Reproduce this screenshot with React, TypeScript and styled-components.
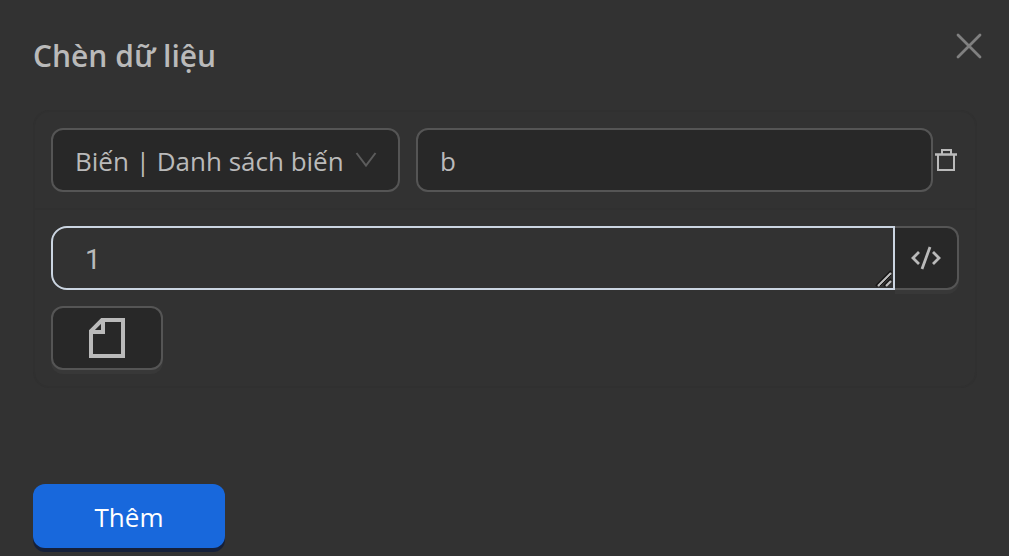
import React from "react";
import styled, { createGlobalStyle, css } from "styled-components";

const GlobalStyle = createGlobalStyle`
  *, *::before, *::after { box-sizing: border-box; }
  body {
    margin: 0;
    background: #323232;
    color: #bababa;
    font-family: "Open Sans", "Noto Sans", sans-serif;
    font-size: 26px;
  }
`;

const Dialog = styled.main`
  padding: 32px 32px 8px 33px;
`;

const Header = styled.header`
  display: flex;
  justify-content: space-between;
  align-items: flex-start;
  height: 78px;
`;

const Title = styled.h1`
  margin: 0;
  font-size: 30px;
  font-weight: 600;
  line-height: 48px;
`;

const IconButton = styled.button<{ $color?: string }>`
  display: flex;
  padding: 0;
  border: 0;
  background: none;
  color: ${(p) => p.$color ?? "#bababa"};
`;

const CloseButton = styled(IconButton)`
  margin-right: -6px;
`;

const Card = styled.section`
  border: 2px solid #303030;
  border-radius: 16px;
`;

const VariableRow = styled.div`
  display: flex;
  align-items: center;
  padding: 16px;
  border-bottom: 2px solid #303030;
`;

const control = css`
  height: 64px;
  border: 2px solid #555555;
  border-radius: 12px;
  background: #282828;
  color: #bababa;
  font: inherit;
  outline: none;
`;

const SelectWrap = styled.div`
  position: relative;
  flex: none;
  margin-right: 16px;
`;

const Select = styled.select`
  ${control}
  display: block;
  width: 349px;
  padding: 2px 22px 0;
  appearance: none;
`;

const Chevron = styled.svg`
  position: absolute;
  top: 24px;
  right: 23px;
  pointer-events: none;
`;

const NameInput = styled.input`
  ${control}
  flex: 1;
  min-width: 0;
  padding: 2px 22px 0;
`;

const Body = styled.div`
  padding: 16px;
`;

const ValueRow = styled.div`
  display: flex;
  margin-bottom: 16px;
`;

const ValueWrap = styled.div`
  position: relative;
  flex: 1;
`;

const ValueArea = styled.textarea`
  display: block;
  width: 100%;
  height: 64px;
  padding: 14px 32px 8px;
  border: 2px solid #cbd5e1;
  border-radius: 16px 0 0 16px;
  background: transparent;
  color: #bababa;
  font-family: Roboto, sans-serif;
  font-size: 28px;
  line-height: 36px;
  outline: none;
  resize: none;
  overflow: hidden;
`;

const Grip = styled.svg`
  position: absolute;
  right: 2px;
  bottom: 2px;
  pointer-events: none;
`;

const ToolButton = styled.button<{ $width: number; $joined?: boolean }>`
  ${control}
  display: flex;
  align-items: center;
  justify-content: center;
  width: ${(p) => p.$width}px;
  padding: 0;
  box-shadow: 0 4px 0 #383838;
  ${(p) => p.$joined && "border-left: 0; border-radius: 0 12px 12px 0;"}
`;

const Footer = styled.footer`
  padding-top: 96px;
`;

const PrimaryButton = styled.button`
  width: 192px;
  height: 64px;
  padding: 2px 0 0;
  border: 0;
  border-radius: 12px;
  background: #1868dc;
  box-shadow: 0 4px 0 #15203a;
  color: #ffffff;
  font: inherit;
`;

export default function App() {
  return (
    <>
      <GlobalStyle />
      <Dialog>
        <Header>
          <Title>Chèn dữ liệu</Title>
          <CloseButton type="button" aria-label="Đóng" $color="#808080">
            <svg width="28" height="28" viewBox="0 0 28 28" fill="none" stroke="currentColor" strokeWidth="2.8">
              <path d="M3 3L25 25M25 3L3 25" strokeLinecap="round" />
            </svg>
          </CloseButton>
        </Header>
        <Card>
          <VariableRow>
            <SelectWrap>
              <Select aria-label="Biến" defaultValue="list">
                <option value="list">Biến | Danh sách biến</option>
              </Select>
              <Chevron width="22" height="16" viewBox="0 0 22 16" fill="none" stroke="#5c5c5c" strokeWidth="2">
                <path d="M1.500 1L11 13.500L20.500 1" />
              </Chevron>
            </SelectWrap>
            <NameInput aria-label="Tên biến" defaultValue="b" />
            <IconButton type="button" aria-label="Xóa">
              <svg width="26" height="26" viewBox="0 0 26 26" fill="none" stroke="currentColor" strokeWidth="2">
                <path d="M2 7H24M2 8H24" strokeWidth="1.500" />
                <path d="M9 7V3H18V7M5 8V23H21V8" />
              </svg>
            </IconButton>
          </VariableRow>
          <Body>
            <ValueRow>
              <ValueWrap>
                <ValueArea aria-label="Giá trị" defaultValue="1" rows={1} />
                <Grip width="18" height="18" viewBox="0 0 18 18" fill="none">
                  <path d="M1 16L16 1M9 16L16 9" stroke="#151515" strokeWidth="2" />
                  <path d="M3 16L16 3M11 16L16 11" stroke="#bcbcbc" strokeWidth="2.200" />
                  <path d="M5 16L16 5" stroke="#151515" strokeWidth="1" />
                </Grip>
              </ValueWrap>
              <ToolButton type="button" aria-label="Mã" $width={64} $joined>
                <svg width="32" height="26" viewBox="0 0 32 26" fill="none" stroke="currentColor" strokeWidth="2.800">
                  <path d="M9 7L3 13L9 19M23 7L29 13L23 19M20 2L12 24" />
                </svg>
              </ToolButton>
            </ValueRow>
            <ToolButton type="button" aria-label="Tệp" $width={112}>
              <svg width="36" height="40" viewBox="0 0 36 40" fill="none" stroke="currentColor" strokeWidth="4">
                <path d="M13 2H34V38H2V13ZM14 2V14H2" />
              </svg>
            </ToolButton>
          </Body>
        </Card>
        <Footer>
          <PrimaryButton type="button">Thêm</PrimaryButton>
        </Footer>
      </Dialog>
    </>
  );
}
